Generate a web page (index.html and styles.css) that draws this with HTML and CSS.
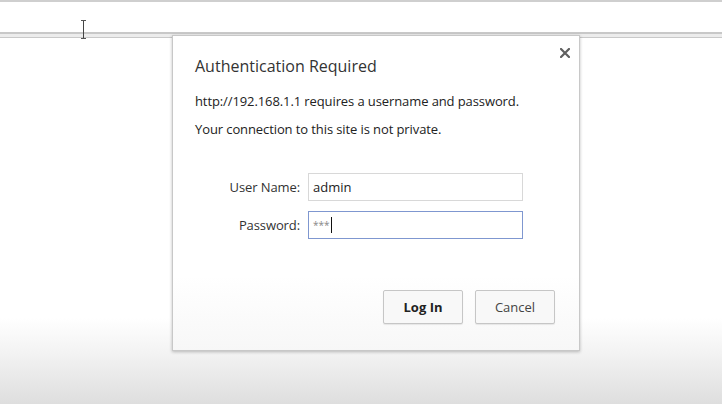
FILE: index.html
```html
<!DOCTYPE html>
<html>
<head>
<meta charset="utf-8">
<link rel="stylesheet" href="styles.css">
</head>
<body>
<div class="page">
  <div class="topbar">
    <span class="ibeam"></span>
  </div>
  <div class="divider"></div>
  <div class="content"></div>
</div>
<div class="dialog">
  <svg class="close" width="10" height="10" viewBox="0 0 10 10"><path d="M1 1 L9 9 M9 1 L1 9" stroke="#5f5f5f" stroke-width="2.2" stroke-linecap="square"/></svg>
  <h1 class="title">Authentication Required</h1>
  <p class="msg">http://192.168.1.1 requires a username and password.</p>
  <p class="msg second">Your connection to this site is not private.</p>
  <div class="form">
    <label class="row">
      <span class="label">User Name:</span>
      <span class="input">admin</span>
    </label>
    <label class="row">
      <span class="label">Password:</span>
      <span class="input focused">***<span class="caret"></span></span>
    </label>
  </div>
  <div class="buttons">
    <button class="btn primary">Log In</button>
    <button class="btn">Cancel</button>
  </div>
</div>
</body>
</html>
```
FILE: styles.css
```css
html, body {
  margin: 0;
  padding: 0;
  width: 722px;
  height: 404px;
  overflow: hidden;
}
body {
  font-family: "Open Sans", "Noto Sans", sans-serif;
  color: #333;
  background: #fff;
  position: relative;
}
.page {
  height: 404px;
  display: flex;
  flex-direction: column;
  background: linear-gradient(to bottom, #fff 0, #fff 318px, #f4f4f4 350px, #dedede 404px);
}
.topbar {
  height: 32px;
  border-top: 2px solid #cfcfcf;
  box-sizing: border-box;
  position: relative;
}
.ibeam {
  position: absolute;
  left: 81px;
  top: 18px;
  width: 5px;
  height: 19px;
  border-top: 1px solid #555;
  border-bottom: 1px solid #555;
  box-sizing: border-box;
  z-index: 2;
}
.ibeam::after {
  content: "";
  position: absolute;
  left: 2px;
  top: 0;
  width: 1px;
  height: 17px;
  background: #444;
}
.divider {
  height: 6px;
  border-top: 2px solid #c8c8c8;
  border-bottom: 1px solid #c9c9c9;
  background: #ececec;
  box-sizing: border-box;
}
.content {
  flex: 1;
}
.dialog {
  position: absolute;
  left: 172px;
  top: 35px;
  width: 408px;
  height: 316px;
  box-sizing: border-box;
  background: linear-gradient(to bottom, #fff 0, #fff 240px, #f7f7f7 316px);
  border: 1px solid #c8c8c8;
  box-shadow: 0 1px 3px rgba(0,0,0,0.25);
  padding: 18px 22px 0 22px;
}
.close {
  position: absolute;
  left: 387px;
  top: 12px;
}
.title {
  margin: 0;
  font-size: 16px;
  font-weight: normal;
  color: #333;
  line-height: 24px;
}
.msg {
  margin: 14px 0 0 0;
  font-size: 13px;
  line-height: 18px;
  color: #222;
  letter-spacing: -0.1px;
}
.msg.second {
  margin-top: 10px;
}
.form {
  margin-top: 35px;
  display: flex;
  flex-direction: column;
  gap: 10px;
}
.row {
  display: flex;
  align-items: center;
}
.label {
  width: 105px;
  text-align: right;
  font-size: 13px;
  color: #333;
  padding-right: 8px;
  letter-spacing: -0.1px;
}
.input {
  width: 215px;
  height: 28px;
  box-sizing: border-box;
  border: 1px solid #d8d8d8;
  background: #fff;
  font-size: 13px;
  line-height: 25px;
  padding: 0 4px;
  color: #222;
  display: flex;
  align-items: center;
}
.input.focused {
  border-color: #7f97d0;
  height: 28px;
  color: #888;
  font-size: 10px;
}
.caret {
  display: inline-block;
  width: 1px;
  height: 16px;
  background: #111;
  margin-left: 1px;
}
.buttons {
  margin-top: 51px;
  display: flex;
  justify-content: flex-end;
  gap: 12px;
  padding-right: 2px;
}
.btn {
  width: 80px;
  height: 34px;
  box-sizing: border-box;
  border: 1px solid #c6c6c6;
  border-radius: 2px;
  background: #f8f8f8;
  box-shadow: 0 1px 1px rgba(0,0,0,0.08);
  font-family: "Open Sans", "Noto Sans", sans-serif;
  font-size: 13px;
  color: #444;
  padding: 0;
}
.btn.primary {
  font-weight: bold;
  color: #222;
}
```
